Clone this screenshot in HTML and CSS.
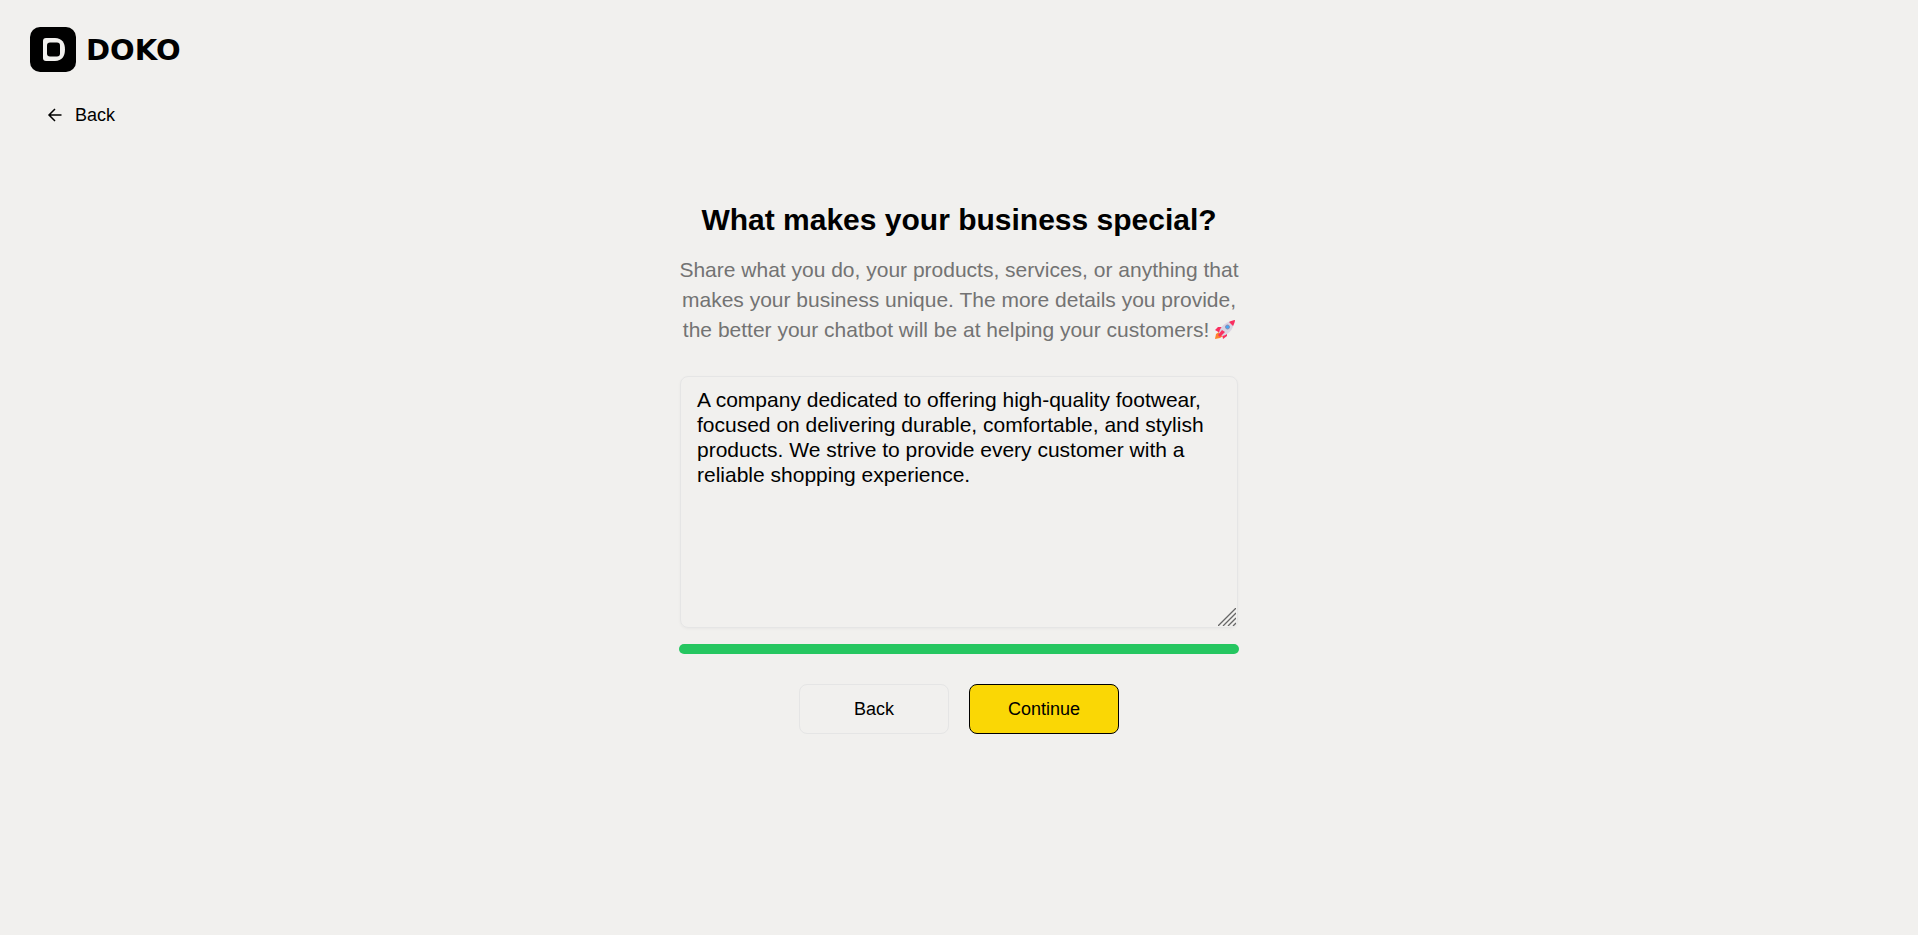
FILE: index.html
```
<!DOCTYPE html>
<html lang="en">
<head>
	<meta charset="UTF-8">
	<meta name="viewport" content="width=device-width, initial-scale=1">
	<title>DOKO</title>
	<link rel="stylesheet" href="styles.css">
</head>
<body>
	<header class="header">
		<a class="logo" href="#">
			<svg class="logo-mark" viewBox="0 0 46 46" aria-hidden="true">
				<rect width="46" height="45" rx="10"/>
				<path class="logo-ring" d="M16 11h9c7 0 10 5 10 11.500S32 34 25 34h-9a3 3 0 0 1-3-3V14a3 3 0 0 1 3-3z"/>
				<rect x="17" y="15.500" width="13" height="14" rx="3"/>
			</svg>
			<span class="logo-text">DOKO</span>
		</a>
		<button class="back-link" type="button">
			<svg class="arrow" viewBox="0 0 16 16" aria-hidden="true">
				<path d="M14.500 8H2M8 2L2 8l6 6"/>
			</svg>
			Back
		</button>
	</header>

	<main class="step">
		<h1 class="title">What makes your business special?</h1>
		<p class="intro">
			Share what you do, your products, services, or anything that<br>
			makes your business unique. The more details you provide,<br>
			the better your chatbot will be at helping your customers!
			<svg class="rocket" viewBox="0 0 20 20" aria-hidden="true">
				<path fill="#ff822d" d="M0 19l1-5 3-2 4 4-3 2z"/>
				<path fill="#f92f60" d="M0 10l3-3h5l-3 6zM12 11v5l-4 3-1-5z"/>
				<path fill="#d9d4e2" d="M4 13C5 7 10 2 17 1l2 2c-1 7-6 12-12 13z"/>
				<path fill="#f92f60" d="M14 2c2-1 4-2 6-2 0 2-1 4-2 6z"/>
				<path fill="#f92f60" d="M3 15l4-5 3 2-5 5z"/>
				<circle cx="12.500" cy="7" r="2" fill="#3fa9f5" stroke="#8d8bb5"/>
			</svg>
		</p>
		<form class="form">
			<div class="about-wrap">
				<textarea class="about" name="about" aria-label="About your business">A company dedicated to offering high-quality footwear, focused on delivering durable, comfortable, and stylish products. We strive to provide every customer with a reliable shopping experience.</textarea>
				<svg class="grip" viewBox="0 0 18 18" aria-hidden="true">
					<path d="M0 18L18 0M5 18L18 5M10 18l8-8M15 18l3-3"/>
				</svg>
			</div>
			<div class="meter"></div>
			<div class="actions">
				<button class="btn" type="button">Back</button>
				<button class="btn btn-primary" type="submit">Continue</button>
			</div>
		</form>
	</main>
</body>
</html>
```
FILE: styles.css
```
* {
	box-sizing: border-box;
	margin: 0;
	padding: 0;
}
body {
	min-height: 100vh;
	background: #f1f0ee;
	color: #000;
	font-family: "Liberation Sans", Arial, sans-serif;
	font-size: 18px;
}
button,
textarea {
	font: inherit;
	color: inherit;
}
.header {
	display: flex;
	flex-direction: column;
	align-items: flex-start;
	gap: 24px;
	padding: 27px 30px 0;
}
.logo {
	display: flex;
	align-items: center;
	gap: 10px;
	color: #000;
	text-decoration: none;
}
.logo-mark {
	width: 46px;
	height: 46px;
}
.logo-ring {
	fill: #f1f0ee;
}
.logo-text {
	font-family: "DejaVu Sans", sans-serif;
	font-size: 29px;
	font-weight: 700;
	line-height: 46px;
}
.back-link {
	display: flex;
	align-items: center;
	gap: 12px;
	padding: 0 17px;
	border: 0;
	background: none;
	line-height: 36px;
	cursor: pointer;
}
.arrow {
	width: 16px;
	height: 16px;
	fill: none;
	stroke: #000;
	stroke-width: 1.5;
}
.step {
	width: 100%;
	max-width: 560px;
	margin: 67px auto 0;
}
.title {
	font-size: 30px;
	line-height: 40px;
	text-align: center;
	white-space: nowrap;
}
.intro {
	margin-top: 15px;
	color: #737373;
	font-size: 21px;
	line-height: 30px;
	text-align: center;
	white-space: nowrap;
}
.rocket {
	width: 20px;
	height: 20px;
	vertical-align: -3px;
}
.form {
	margin-top: 31px;
}
.about-wrap {
	position: relative;
	width: 558px;
	max-width: 100%;
	margin: 0 auto;
}
.about {
	display: block;
	width: 100%;
	height: 252px;
	padding: 10px 16px;
	border: 1px solid #e5e5e5;
	border-radius: 8px;
	background: transparent;
	box-shadow: 0 1px 3px rgba(0, 0, 0, 0.04);
	font-size: 21px;
	line-height: 25px;
	resize: vertical;
}
.about::-webkit-resizer {
	background: transparent;
}
.grip {
	position: absolute;
	right: 2px;
	bottom: 2px;
	width: 18px;
	height: 18px;
	fill: none;
	stroke: #666;
	stroke-width: 1.3;
	pointer-events: none;
}
.meter {
	height: 10px;
	margin-top: 16px;
	border-radius: 5px;
	background: #25c660;
}
.actions {
	display: flex;
	justify-content: center;
	gap: 20px;
	margin-top: 30px;
}
.btn {
	width: 150px;
	height: 50px;
	border: 1px solid #e5e5e5;
	border-radius: 8px;
	background: transparent;
	cursor: pointer;
}
.btn-primary {
	border-color: #000;
	background: #fad705;
}
```
